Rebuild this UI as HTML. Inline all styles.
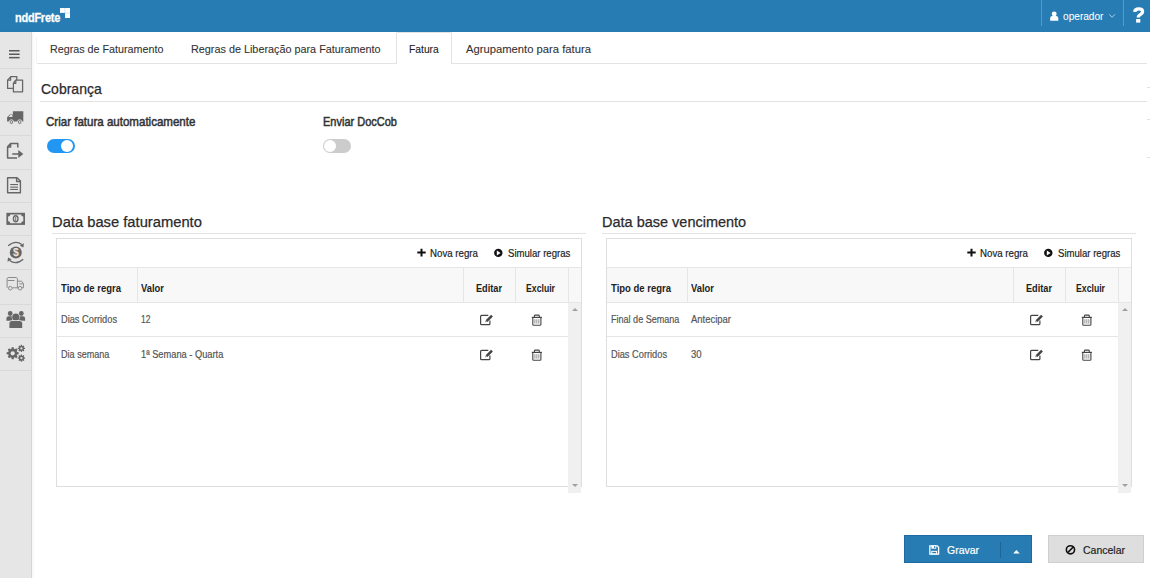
<!DOCTYPE html>
<html><head><meta charset="utf-8"><style>
*{margin:0;padding:0;box-sizing:border-box}
html,body{width:1150px;height:578px;overflow:hidden;background:#fff;font-family:"Liberation Sans",sans-serif;position:relative}
#ico{position:absolute;left:0;top:0}
.t{position:absolute;white-space:nowrap;transform-origin:0 0;-webkit-text-stroke:0.2px currentColor}
#hdr{position:absolute;left:0;top:0;width:1150px;height:31.5px;background:#277db3}
.hdiv{position:absolute;top:0;width:1px;height:26px;background:#5a9ac6}
.logo-sq{position:absolute;width:10px;height:10px;background:#fff;clip-path:polygon(0 0,100% 0,100% 100%,50% 100%,50% 50%,0 50%)}
#side{position:absolute;left:0;top:31.5px;width:32px;height:547px;background:#e6e6e6;border-right:1px solid #d6d6d6;box-shadow:1px 0 3px rgba(0,0,0,0.05)}
.sep{position:absolute;left:0;width:31px;height:1px;background:#d9d9d9}
.hline{position:absolute;height:1px;background:#e3e3e3}
.vline{position:absolute;width:1px;background:#e6e6e6}
#acttab{position:absolute;left:396px;top:32px;width:56px;height:32px;border:1px solid #e3e3e3;border-bottom:none;background:#fff;border-radius:2px 2px 0 0}
.tog{position:absolute;width:28px;height:14px;border-radius:7px}
.tog.on{background:#2196f3}.tog.off{background:#ccc}
.tog i{position:absolute;top:1px;width:12px;height:12px;border-radius:6px;background:#fff}
.tog.on i{left:14px}.tog.off i{left:1px}
.tbox{position:absolute;width:526px;height:249px;border:1px solid #dedede}
.thead{position:absolute;width:524px;height:35.6px;background:#f8f8f8;border-top:1px solid #e6e6e6;border-bottom:1px solid #e6e6e6}
.sbar{position:absolute;width:13px;height:189.5px;background:#f0f0f0}
.arr{position:absolute;width:0;height:0;border-left:3px solid transparent;border-right:3px solid transparent}
.arr.up{border-bottom:3.5px solid #a0a0a0}.arr.dn{border-top:3.5px solid #a0a0a0}
#bgrav{position:absolute;left:904px;top:535.4px;width:128px;height:28px;background:#277db3;border:1px solid #1f6aa3}
.bdiv{position:absolute;left:999.5px;top:541.5px;width:1px;height:16px;background:#1f659a}
#bcanc{position:absolute;left:1048px;top:535px;width:95.5px;height:28px;background:#dedede;border:1px solid #cfcfcf}
</style></head>
<body>
<div id="hdr"></div>
<div class="t" style="left:15.00px;top:10.97px;font-size:13.5px;line-height:13.5px;color:#fff;font-weight:bold;-webkit-text-stroke:0;-webkit-text-stroke:0.3px currentColor;transform:scaleX(0.8138);letter-spacing:-0.3px;">nddFrete</div>
<div class="logo-sq" style="left:60px;top:8px;"></div>
<div class="hdiv" style="left:1041px"></div><div class="hdiv" style="left:1123px"></div>
<div class="t" style="left:1063.40px;top:10.51px;font-size:11.8px;line-height:11.8px;color:#fff;-webkit-text-stroke:0.05px currentColor;transform:scaleX(0.8574);">operador</div>
<div id="side"></div>
<div class="sep" style="top:68px"></div>
<div class="sep" style="top:101px"></div>
<div class="sep" style="top:135px"></div>
<div class="sep" style="top:169px"></div>
<div class="sep" style="top:202px"></div>
<div class="sep" style="top:235px"></div>
<div class="sep" style="top:269px"></div>
<div class="sep" style="top:304px"></div>
<div class="sep" style="top:337px"></div>
<div class="sep" style="top:370px"></div>
<div class="hline" style="left:37px;width:1110px;top:63px"></div><div class="vline" style="left:36px;top:37px;height:26px;background:#f3f3f3"></div>
<div id="acttab"></div>
<div class="t" style="left:50.00px;top:43.38px;font-size:11.6px;line-height:11.6px;color:#333;-webkit-text-stroke:0.1px currentColor;transform:scaleX(0.9264);">Regras de Faturamento</div>
<div class="t" style="left:191.30px;top:43.38px;font-size:11.6px;line-height:11.6px;color:#333;-webkit-text-stroke:0.1px currentColor;transform:scaleX(0.9334);">Regras de Liberação para Faturamento</div>
<div class="t" style="left:408.70px;top:43.38px;font-size:11.6px;line-height:11.6px;color:#222;-webkit-text-stroke:0.1px currentColor;transform:scaleX(0.8888);">Fatura</div>
<div class="t" style="left:466.00px;top:43.38px;font-size:11.6px;line-height:11.6px;color:#333;-webkit-text-stroke:0.1px currentColor;transform:scaleX(0.9692);">Agrupamento para fatura</div>
<div class="t" style="left:40.60px;top:81.30px;font-size:15px;line-height:15px;color:#2a2a2a;-webkit-text-stroke:0.25px currentColor;transform:scaleX(0.9333);">Cobrança</div>
<div class="hline" style="left:40px;width:1107px;top:101px"></div>
<div class="hline" style="left:1147px;width:3px;top:87px;background:#e0e0e0"></div>
<div class="hline" style="left:1147px;width:3px;top:119px;background:#e0e0e0"></div>
<div class="hline" style="left:1147px;width:3px;top:157px;background:#e0e0e0"></div>
<div class="t" style="left:46.10px;top:115.95px;font-size:12.1px;line-height:12.1px;color:#333;-webkit-text-stroke:0.5px currentColor;transform:scaleX(0.9540);">Criar fatura automaticamente</div>
<div class="t" style="left:323.00px;top:115.95px;font-size:12.1px;line-height:12.1px;color:#333;-webkit-text-stroke:0.5px currentColor;transform:scaleX(0.9094);">Enviar DocCob</div>
<div class="tog on" style="left:46.6px;top:139.2px"><i></i></div>
<div class="tog off" style="left:323px;top:139px"><i></i></div>
<div class="t" style="left:51.60px;top:214.13px;font-size:15.2px;line-height:15.2px;color:#2a2a2a;-webkit-text-stroke:0.25px currentColor;transform:scaleX(0.9701);">Data base faturamento</div>
<div class="hline" style="left:52px;width:534px;top:233px"></div>
<div class="tbox" style="left:56px;top:238px"></div>
<div class="thead" style="left:57px;top:267px"></div>
<div class="vline" style="left:137px;top:268px;height:34px"></div>
<div class="vline" style="left:463px;top:268px;height:34px"></div>
<div class="vline" style="left:515px;top:268px;height:34px"></div>
<div class="vline" style="left:568px;top:268px;height:34px"></div>
<div class="sbar" style="left:568px;top:303px"></div>
<div class="arr up" style="left:571.7px;top:308px"></div>
<div class="arr dn" style="left:571.7px;top:484px"></div>
<div class="hline" style="left:57px;width:511px;top:336px;background:#e6e6e6"></div>
<div class="t" style="left:430.00px;top:247.76px;font-size:11.5px;line-height:11.5px;color:#222;transform:scaleX(0.8438);">Nova regra</div>
<div class="t" style="left:507.50px;top:247.76px;font-size:11.5px;line-height:11.5px;color:#222;transform:scaleX(0.8332);">Simular regras</div>
<div class="t" style="left:61.00px;top:283.22px;font-size:10.6px;line-height:10.6px;color:#222;font-weight:bold;-webkit-text-stroke:0;transform:scaleX(0.8961);">Tipo de regra</div>
<div class="t" style="left:141.00px;top:283.22px;font-size:10.6px;line-height:10.6px;color:#222;font-weight:bold;-webkit-text-stroke:0;transform:scaleX(0.8871);">Valor</div>
<div class="t" style="left:475.50px;top:283.22px;font-size:10.6px;line-height:10.6px;color:#222;font-weight:bold;-webkit-text-stroke:0;transform:scaleX(0.8655);">Editar</div>
<div class="t" style="left:526.00px;top:283.22px;font-size:10.6px;line-height:10.6px;color:#222;font-weight:bold;-webkit-text-stroke:0;transform:scaleX(0.8203);">Excluir</div>
<div class="t" style="left:61.00px;top:313.89px;font-size:11px;line-height:11px;color:#555;transform:scaleX(0.8405);">Dias Corridos</div>
<div class="t" style="left:141.00px;top:313.89px;font-size:11px;line-height:11px;color:#555;transform:scaleX(0.7683);">12</div>
<div class="t" style="left:61.00px;top:348.89px;font-size:11px;line-height:11px;color:#555;transform:scaleX(0.8246);">Dia semana</div>
<div class="t" style="left:141.00px;top:348.89px;font-size:11px;line-height:11px;color:#555;transform:scaleX(0.8431);">1ª Semana - Quarta</div>
<div class="t" style="left:601.60px;top:214.13px;font-size:15.2px;line-height:15.2px;color:#2a2a2a;-webkit-text-stroke:0.25px currentColor;transform:scaleX(0.9541);">Data base vencimento</div>
<div class="hline" style="left:602px;width:534px;top:233px"></div>
<div class="tbox" style="left:606px;top:238px"></div>
<div class="thead" style="left:607px;top:267px"></div>
<div class="vline" style="left:687px;top:268px;height:34px"></div>
<div class="vline" style="left:1013px;top:268px;height:34px"></div>
<div class="vline" style="left:1065px;top:268px;height:34px"></div>
<div class="vline" style="left:1118px;top:268px;height:34px"></div>
<div class="sbar" style="left:1118px;top:303px"></div>
<div class="arr up" style="left:1121.7px;top:308px"></div>
<div class="arr dn" style="left:1121.7px;top:484px"></div>
<div class="hline" style="left:607px;width:511px;top:336px;background:#e6e6e6"></div>
<div class="t" style="left:980.00px;top:247.76px;font-size:11.5px;line-height:11.5px;color:#222;transform:scaleX(0.8438);">Nova regra</div>
<div class="t" style="left:1057.50px;top:247.76px;font-size:11.5px;line-height:11.5px;color:#222;transform:scaleX(0.8332);">Simular regras</div>
<div class="t" style="left:611.00px;top:283.22px;font-size:10.6px;line-height:10.6px;color:#222;font-weight:bold;-webkit-text-stroke:0;transform:scaleX(0.8961);">Tipo de regra</div>
<div class="t" style="left:691.00px;top:283.22px;font-size:10.6px;line-height:10.6px;color:#222;font-weight:bold;-webkit-text-stroke:0;transform:scaleX(0.8871);">Valor</div>
<div class="t" style="left:1025.50px;top:283.22px;font-size:10.6px;line-height:10.6px;color:#222;font-weight:bold;-webkit-text-stroke:0;transform:scaleX(0.8655);">Editar</div>
<div class="t" style="left:1076.00px;top:283.22px;font-size:10.6px;line-height:10.6px;color:#222;font-weight:bold;-webkit-text-stroke:0;transform:scaleX(0.8203);">Excluir</div>
<div class="t" style="left:611.00px;top:313.89px;font-size:11px;line-height:11px;color:#555;transform:scaleX(0.8225);">Final de Semana</div>
<div class="t" style="left:691.00px;top:313.89px;font-size:11px;line-height:11px;color:#555;transform:scaleX(0.8608);">Antecipar</div>
<div class="t" style="left:611.00px;top:348.89px;font-size:11px;line-height:11px;color:#555;transform:scaleX(0.8405);">Dias Corridos</div>
<div class="t" style="left:691.00px;top:348.89px;font-size:11px;line-height:11px;color:#555;transform:scaleX(0.8664);">30</div>
<div id="bgrav"></div><div class="bdiv"></div>
<div class="t" style="left:946.70px;top:544.86px;font-size:11.5px;line-height:11.5px;color:#fff;transform:scaleX(0.9105);">Gravar</div>
<div id="bcanc"></div>
<div class="t" style="left:1083.30px;top:544.56px;font-size:11.5px;line-height:11.5px;color:#222;transform:scaleX(0.9126);">Cancelar</div>
<svg id="ico" width="1150" height="578" viewBox="0 0 1150 578">
<!-- hamburger -->
<g fill="#5a5a5a"><rect x="9" y="50" width="10.6" height="1.5"/><rect x="9" y="53.5" width="10.6" height="1.5"/><rect x="9" y="56.9" width="10.6" height="1.5"/></g>
<!-- copy -->
<g fill="none" stroke="#666" stroke-width="1.25" stroke-linejoin="round">
<path d="M10.5 76.7 H16.8 V80 M12.9 88.4 H7.6 V80.2 L10.8 76.7"/>
<path d="M7.6 80.2 H10.6 V76.8"/>
<path d="M15.6 80.1 H22.6 V91.8 H13.4 V83.3 Z"/>
<path d="M13.4 83.3 H15.8 V80.3"/>
</g>
<!-- truck -->
<g fill="#666"><path d="M12.9 111.3 H23.3 V121.4 H7.1 V117.3 L9.8 114.4 H12.9 Z"/></g>
<path d="M8.5 117.1 L10.2 115.1 H12.4 V117.1 Z" fill="#e6e6e6"/>
<g fill="#666" stroke="#e6e6e6" stroke-width="0.9"><circle cx="11.4" cy="122" r="2.2"/><circle cx="19.7" cy="122" r="2.2"/></g>
<circle cx="11.4" cy="122" r="0.9" fill="#e6e6e6"/><circle cx="19.7" cy="122" r="0.9" fill="#e6e6e6"/>
<!-- export -->
<g fill="none" stroke="#666" stroke-width="1.5" stroke-linejoin="round">
<path d="M10.3 143.6 H17.8 V147.4 M17 158 H7.6 V146.8 L10.6 143.6 V147.1 H7.8"/>
</g>
<path d="M12.2 153.2 H18.3 V150.1 L23.3 154 L18.3 157.9 V154.8 H12.2 Z" fill="#666"/>
<!-- doc lines -->
<g fill="none" stroke="#666" stroke-width="1.4" stroke-linejoin="round">
<path d="M7.6 177.7 H17 L20.4 181.1 V192.8 H7.6 Z"/><path d="M16.6 177.8 V181.5 H20.3"/>
</g>
<g fill="#666"><rect x="10.2" y="184" width="7.8" height="1.1"/><rect x="10.2" y="186.6" width="7.8" height="1.1"/><rect x="10.2" y="188.9" width="7.8" height="1.1"/></g>
<!-- money -->
<rect x="6.4" y="212.8" width="18.6" height="12.1" fill="#666"/>
<path d="M10.2 214.4 H21.2 A2 2 0 0 0 23.3 216.5 V221.2 A2 2 0 0 0 21.2 223.3 H10.2 A2 2 0 0 0 8.1 221.2 V216.5 A2 2 0 0 0 10.2 214.4 Z" fill="#e6e6e6"/>
<ellipse cx="15.7" cy="218.85" rx="2.3" ry="3.1" fill="none" stroke="#666" stroke-width="1.3"/>
<path d="M15.3 217.3 L16.2 216.9 V220.9 H15.3 V218 L14.8 218.3 Z" fill="#666"/>
<!-- dollar cycle -->
<circle cx="15.8" cy="252.5" r="6" fill="#666"/>
<text x="15.8" y="256.3" font-family="Liberation Sans" font-weight="bold" font-size="10.5" fill="#e6e6e6" text-anchor="middle">$</text>
<g fill="none" stroke="#666" stroke-width="1.3"><path d="M8.2 245.8 Q15.5 239.5 21.8 244.6"/><path d="M23.2 259.2 Q16 265.5 9.6 260.4"/></g>
<path d="M19.8 245.8 L23.9 243.2 L23.4 247.6 Z" fill="#666"/><path d="M11.6 259.2 L7.5 261.8 L8 257.4 Z" fill="#666"/>
<!-- truck outline -->
<g fill="none" stroke="#8a8a8a" stroke-width="1"><path d="M7.1 287.8 V278.3 L8.2 277.5 H16.4 L17.4 278.3 V287.8 H17.9 M17.4 281.2 H21.5 L23.4 283.5 V287.8 H22"/><circle cx="10.3" cy="288.2" r="1.8"/><circle cx="20" cy="288.2" r="1.8"/><path d="M12.3 287.8 H18" /><path d="M7.5 280.5 H14.5"/><path d="M19.3 283.8 H23"/></g>
<!-- users -->
<g fill="#666">
<circle cx="10.2" cy="313.5" r="2.4"/><circle cx="21.3" cy="313.5" r="2.4"/>
<path d="M6.4 320.8 V318.5 Q6.4 316.2 8.7 316.2 H12.5 V320.8 Z"/>
<path d="M25.1 320.8 V318.5 Q25.1 316.2 22.8 316.2 H19 V320.8 Z"/>
<g stroke="#e6e6e6" stroke-width="1.1" style="paint-order:stroke">
<circle cx="15.8" cy="317.2" r="3.6"/>
<path d="M9.4 327.9 V323.4 Q9.4 320.9 11.9 320.9 H19.7 Q22.2 320.9 22.2 323.4 V327.9 Z"/>
</g>
</g>
<!-- gears -->
<path d="M17.13 352.07 L18.71 352.23 L18.71 354.37 L17.13 354.53 L16.70 355.56 L17.70 356.79 L16.19 358.30 L14.96 357.30 L13.93 357.73 L13.77 359.31 L11.63 359.31 L11.47 357.73 L10.44 357.30 L9.21 358.30 L7.70 356.79 L8.70 355.56 L8.27 354.53 L6.69 354.37 L6.69 352.23 L8.27 352.07 L8.70 351.04 L7.70 349.81 L9.21 348.30 L10.44 349.30 L11.47 348.87 L11.63 347.29 L13.77 347.29 L13.93 348.87 L14.96 349.30 L16.19 348.30 L17.70 349.81 L16.70 351.04 Z" fill="#666"/><path d="M24.02 347.73 L25.05 347.82 L25.05 348.98 L24.02 349.07 L23.72 349.77 L24.39 350.57 L23.57 351.39 L22.77 350.72 L22.07 351.02 L21.98 352.05 L20.82 352.05 L20.73 351.02 L20.03 350.72 L19.23 351.39 L18.41 350.57 L19.08 349.77 L18.78 349.07 L17.75 348.98 L17.75 347.82 L18.78 347.73 L19.08 347.03 L18.41 346.23 L19.23 345.41 L20.03 346.08 L20.73 345.78 L20.82 344.75 L21.98 344.75 L22.07 345.78 L22.77 346.08 L23.57 345.41 L24.39 346.23 L23.72 347.03 Z" fill="#666"/><path d="M24.02 357.43 L25.05 357.52 L25.05 358.68 L24.02 358.77 L23.72 359.47 L24.39 360.27 L23.57 361.09 L22.77 360.42 L22.07 360.72 L21.98 361.75 L20.82 361.75 L20.73 360.72 L20.03 360.42 L19.23 361.09 L18.41 360.27 L19.08 359.47 L18.78 358.77 L17.75 358.68 L17.75 357.52 L18.78 357.43 L19.08 356.73 L18.41 355.93 L19.23 355.11 L20.03 355.78 L20.73 355.48 L20.82 354.45 L21.98 354.45 L22.07 355.48 L22.77 355.78 L23.57 355.11 L24.39 355.93 L23.72 356.73 Z" fill="#666"/>
<circle cx="12.7" cy="353.3" r="2.1" fill="#e6e6e6"/><circle cx="21.4" cy="348.4" r="1.1" fill="#e6e6e6"/><circle cx="21.4" cy="358.1" r="1.1" fill="#e6e6e6"/>
<!-- user header -->
<g fill="#fff"><circle cx="1054.2" cy="13.9" r="2.45"/><path d="M1050.2 20.8 V18.2 Q1050.2 16 1052.4 16 H1056.1 Q1058.3 16 1058.3 18.2 V20.8 Z"/></g>
<path d="M1109.2 14.3 L1112.1 17.3 L1115 14.3" fill="none" stroke="#b9d4ea" stroke-width="0.9"/>
<g transform="translate(0 0)"><path d="M417.3 252.6 H425.7 M421.5 248.8 V256.4" stroke="#111" stroke-width="2"/>
<circle cx="498.3" cy="252.9" r="4.2" fill="#111"/><path d="M496.8 250.4 L500.6 252.9 L496.8 255.4 Z" fill="#fff"/></g><g transform="translate(0 0.0)">
<path d="M488.3 315.4 H481.6 Q480.6 315.4 480.6 316.4 V323.7 Q480.6 324.7 481.6 324.7 H488.9 Q489.9 324.7 489.9 323.7 V320.4" fill="none" stroke="#444" stroke-width="1.2"/>
<path d="M485.4 322.3 L485.9 320 L491.1 314.8 L492.9 316.6 L487.7 321.8 Z" fill="#444"/>
<path d="M486.1 321.7 L486.4 320.6 L487.2 321.4 Z" fill="#fff"/>
<path d="M531.8 317.4 H541.9" stroke="#444" stroke-width="1.2"/>
<path d="M534.4 317.2 V316 Q534.4 315.1 535.3 315.1 H538.4 Q539.3 315.1 539.3 316 V317.2" fill="none" stroke="#444" stroke-width="1.1"/>
<path d="M532.8 317.6 V324.4 Q532.8 325.3 533.7 325.3 H540 Q540.9 325.3 540.9 324.4 V317.6" fill="none" stroke="#444" stroke-width="1.1"/>
<path d="M534.9 319.2 V323.6 M536.85 319.2 V323.6 M538.8 319.2 V323.6" stroke="#777" stroke-width="0.8"/>
</g><g transform="translate(0 35.0)">
<path d="M488.3 315.4 H481.6 Q480.6 315.4 480.6 316.4 V323.7 Q480.6 324.7 481.6 324.7 H488.9 Q489.9 324.7 489.9 323.7 V320.4" fill="none" stroke="#444" stroke-width="1.2"/>
<path d="M485.4 322.3 L485.9 320 L491.1 314.8 L492.9 316.6 L487.7 321.8 Z" fill="#444"/>
<path d="M486.1 321.7 L486.4 320.6 L487.2 321.4 Z" fill="#fff"/>
<path d="M531.8 317.4 H541.9" stroke="#444" stroke-width="1.2"/>
<path d="M534.4 317.2 V316 Q534.4 315.1 535.3 315.1 H538.4 Q539.3 315.1 539.3 316 V317.2" fill="none" stroke="#444" stroke-width="1.1"/>
<path d="M532.8 317.6 V324.4 Q532.8 325.3 533.7 325.3 H540 Q540.9 325.3 540.9 324.4 V317.6" fill="none" stroke="#444" stroke-width="1.1"/>
<path d="M534.9 319.2 V323.6 M536.85 319.2 V323.6 M538.8 319.2 V323.6" stroke="#777" stroke-width="0.8"/>
</g><g transform="translate(550 0)"><path d="M417.3 252.6 H425.7 M421.5 248.8 V256.4" stroke="#111" stroke-width="2"/>
<circle cx="498.3" cy="252.9" r="4.2" fill="#111"/><path d="M496.8 250.4 L500.6 252.9 L496.8 255.4 Z" fill="#fff"/></g><g transform="translate(550 0.0)">
<path d="M488.3 315.4 H481.6 Q480.6 315.4 480.6 316.4 V323.7 Q480.6 324.7 481.6 324.7 H488.9 Q489.9 324.7 489.9 323.7 V320.4" fill="none" stroke="#444" stroke-width="1.2"/>
<path d="M485.4 322.3 L485.9 320 L491.1 314.8 L492.9 316.6 L487.7 321.8 Z" fill="#444"/>
<path d="M486.1 321.7 L486.4 320.6 L487.2 321.4 Z" fill="#fff"/>
<path d="M531.8 317.4 H541.9" stroke="#444" stroke-width="1.2"/>
<path d="M534.4 317.2 V316 Q534.4 315.1 535.3 315.1 H538.4 Q539.3 315.1 539.3 316 V317.2" fill="none" stroke="#444" stroke-width="1.1"/>
<path d="M532.8 317.6 V324.4 Q532.8 325.3 533.7 325.3 H540 Q540.9 325.3 540.9 324.4 V317.6" fill="none" stroke="#444" stroke-width="1.1"/>
<path d="M534.9 319.2 V323.6 M536.85 319.2 V323.6 M538.8 319.2 V323.6" stroke="#777" stroke-width="0.8"/>
</g><g transform="translate(550 35.0)">
<path d="M488.3 315.4 H481.6 Q480.6 315.4 480.6 316.4 V323.7 Q480.6 324.7 481.6 324.7 H488.9 Q489.9 324.7 489.9 323.7 V320.4" fill="none" stroke="#444" stroke-width="1.2"/>
<path d="M485.4 322.3 L485.9 320 L491.1 314.8 L492.9 316.6 L487.7 321.8 Z" fill="#444"/>
<path d="M486.1 321.7 L486.4 320.6 L487.2 321.4 Z" fill="#fff"/>
<path d="M531.8 317.4 H541.9" stroke="#444" stroke-width="1.2"/>
<path d="M534.4 317.2 V316 Q534.4 315.1 535.3 315.1 H538.4 Q539.3 315.1 539.3 316 V317.2" fill="none" stroke="#444" stroke-width="1.1"/>
<path d="M532.8 317.6 V324.4 Q532.8 325.3 533.7 325.3 H540 Q540.9 325.3 540.9 324.4 V317.6" fill="none" stroke="#444" stroke-width="1.1"/>
<path d="M534.9 319.2 V323.6 M536.85 319.2 V323.6 M538.8 319.2 V323.6" stroke="#777" stroke-width="0.8"/>
</g>
<!-- question -->
<path d="M1134.7 11.9 Q1134.9 8.8 1138.7 8.8 Q1142.6 8.8 1142.6 11.6 Q1142.6 13.3 1140.6 14.4 Q1138.3 15.6 1138.3 17.6" fill="none" stroke="#fff" stroke-width="3.3" stroke-linecap="butt"/>
<rect x="1136.1" y="19" width="4.2" height="3.6" fill="#fff"/>
<!-- logo squares separators --><path d="M64.9 8 V13.1 M60 13 H70" stroke="rgba(39,125,179,0.25)" stroke-width="0.8"/>
<!-- save -->
<path d="M929.85 545.85 H937.2 L938.6 547.25 V554.05 H929.85 Z" fill="none" stroke="#fff" stroke-width="1.3"/>
<rect x="931.4" y="545.5" width="4.8" height="3.2" fill="#fff"/><rect x="934.1" y="546.2" width="1.2" height="1.8" fill="#277db3"/>
<rect x="931.75" y="551.35" width="4.9" height="2.6" fill="none" stroke="#fff" stroke-width="1"/>
<!-- caret -->
<path d="M1013.2 553.4 L1016.45 549.9 L1019.7 553.4 Z" fill="#fff"/>
<!-- ban -->
<circle cx="1070.45" cy="549.8" r="4.1" fill="none" stroke="#111" stroke-width="1.6"/>
<path d="M1067.6 552.6 L1073.3 547" stroke="#111" stroke-width="1.6"/>

</svg>
</body></html>
